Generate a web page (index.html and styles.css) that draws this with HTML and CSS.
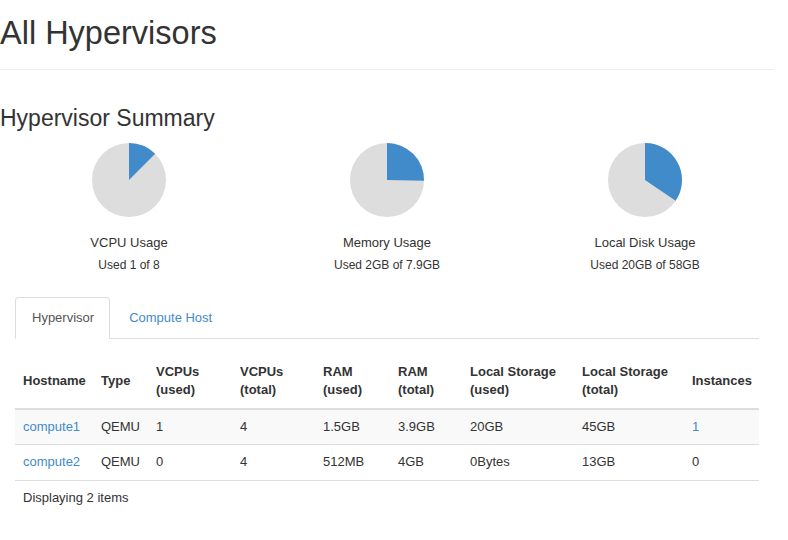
FILE: index.html
```html
<!DOCTYPE html>
<html>
<head>
<meta charset="utf-8">
<title>All Hypervisors</title>
<link rel="stylesheet" href="styles.css">
</head>
<body>
<div class="page">
  <div class="page-header">
    <h1>All Hypervisors</h1>
  </div>
  <h2 class="summary-title">Hypervisor Summary</h2>
  <div class="pies">
    <div class="pie-col">
      <svg class="pie" width="74" height="74" viewBox="0 0 74 74">
        <circle cx="37" cy="37" r="37" fill="#dddddd"/>
        <path d="M37 37 L37 0 A37 37 0 0 1 63.16 10.84 Z" fill="#428bca"/>
      </svg>
      <div class="pie-label">VCPU Usage</div>
      <div class="pie-sub">Used 1 of 8</div>
    </div>
    <div class="pie-col">
      <svg class="pie" width="74" height="74" viewBox="0 0 74 74">
        <circle cx="37" cy="37" r="37" fill="#dddddd"/>
        <path d="M37 37 L37 0 A37 37 0 0 1 73.99 37.71 Z" fill="#428bca"/>
      </svg>
      <div class="pie-label">Memory Usage</div>
      <div class="pie-sub">Used 2GB of 7.9GB</div>
    </div>
    <div class="pie-col">
      <svg class="pie" width="74" height="74" viewBox="0 0 74 74">
        <circle cx="37" cy="37" r="37" fill="#dddddd"/>
        <path d="M37 37 L37 0 A37 37 0 0 1 67.64 57.74 Z" fill="#428bca"/>
      </svg>
      <div class="pie-label">Local Disk Usage</div>
      <div class="pie-sub">Used 20GB of 58GB</div>
    </div>
  </div>

  <div class="tab-area">
    <ul class="nav-tabs">
      <li class="tab active"><a>Hypervisor</a></li>
      <li class="tab"><a>Compute Host</a></li>
    </ul>

    <table class="data-table">
      <colgroup>
        <col class="c-host"><col class="c-type"><col class="c-vu"><col class="c-vt"><col class="c-ru"><col class="c-rt"><col class="c-lu"><col class="c-lt"><col class="c-inst">
      </colgroup>
      <thead>
        <tr>
          <th>Hostname</th>
          <th>Type</th>
          <th>VCPUs<br>(used)</th>
          <th>VCPUs<br>(total)</th>
          <th>RAM<br>(used)</th>
          <th>RAM<br>(total)</th>
          <th>Local Storage<br>(used)</th>
          <th>Local Storage<br>(total)</th>
          <th>Instances</th>
        </tr>
      </thead>
      <tbody>
        <tr class="odd">
          <td><a class="link">compute1</a></td>
          <td>QEMU</td>
          <td>1</td>
          <td>4</td>
          <td>1.5GB</td>
          <td>3.9GB</td>
          <td>20GB</td>
          <td>45GB</td>
          <td><a class="link">1</a></td>
        </tr>
        <tr>
          <td><a class="link">compute2</a></td>
          <td>QEMU</td>
          <td>0</td>
          <td>4</td>
          <td>512MB</td>
          <td>4GB</td>
          <td>0Bytes</td>
          <td>13GB</td>
          <td>0</td>
        </tr>
      </tbody>
      <tfoot>
        <tr>
          <td colspan="9">Displaying 2 items</td>
        </tr>
      </tfoot>
    </table>
  </div>
</div>
</body>
</html>
```

FILE: styles.css
```css
* { box-sizing: border-box; }

body {
  margin: 0;
  font-family: "Liberation Sans", Arial, Helvetica, sans-serif;
  font-size: 13px;
  line-height: 1.42857;
  color: #333333;
  background: #ffffff;
}

.page {
  width: 774px;
}

.page-header {
  padding-bottom: 9px;
  border-bottom: 1px solid #eeeeee;
}

.page-header h1 {
  margin: 16px 0 8px 0;
  font-size: 32.5px;
  font-weight: 400;
  line-height: 1.1;
}

.summary-title {
  margin: 36px 0 0 0;
  font-size: 23px;
  font-weight: 400;
  line-height: 1.1;
}

.pies {
  display: grid;
  grid-template-columns: repeat(3, 1fr);
  margin-top: 12px;
}

.pie-col {
  display: flex;
  flex-direction: column;
  align-items: center;
}

.pie {
  display: block;
}

.pie-label {
  margin-top: 17px;
}

.pie-sub {
  margin-top: 4px;
  font-size: 12px;
}

.tab-area {
  padding: 0 15px;
  margin-top: 23px;
}

.nav-tabs {
  list-style: none;
  margin: 0;
  padding: 0;
  display: flex;
  border-bottom: 1px solid #dddddd;
}

.tab {
  margin-bottom: -1px;
  margin-right: 2px;
}

.tab a {
  display: block;
  padding: 10px 15px 10px 16px;
  line-height: 20px;
  border: 1px solid transparent;
  border-radius: 4px 4px 0 0;
  color: #428bca;
}

.tab.active a {
  color: #555555;
  background: #ffffff;
  border-color: #dddddd #dddddd transparent #dddddd;
}

.data-table {
  margin-top: 16px;
  width: 744px;
  table-layout: fixed;
  border-collapse: collapse;
  border-spacing: 0;
}

.c-host { width: 78px; }
.c-type { width: 55px; }
.c-vu { width: 84px; }
.c-vt { width: 83px; }
.c-ru { width: 75px; }
.c-rt { width: 72px; }
.c-lu { width: 112px; }
.c-lt { width: 110px; }
.c-inst { width: 75px; }

.data-table th {
  text-align: left;
  font-weight: 700;
  padding: 8px;
  vertical-align: middle;
  white-space: nowrap;
  border-bottom: 2px solid #dddddd;
}

.data-table td {
  padding: 8px;
  text-align: left;
  border-top: 1px solid #dddddd;
  white-space: nowrap;
}

.data-table tbody tr.odd td {
  background: #f9f9f9;
}

.data-table tfoot td {
  border-top: 1px solid #dddddd;
}

.link {
  color: #428bca;
  text-decoration: none;
}
```
